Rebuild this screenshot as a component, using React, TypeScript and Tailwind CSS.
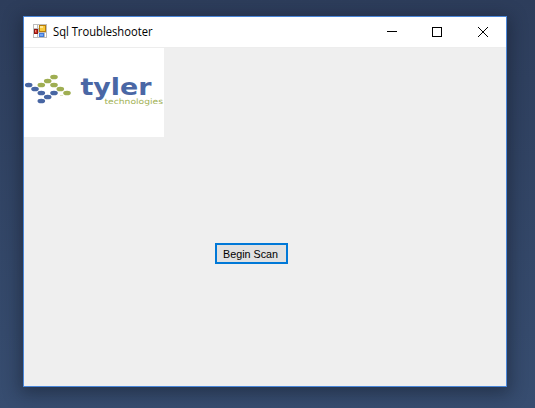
const BLUE_DOTS = [[28.7, 85], [35, 89], [41.3, 93], [47.7, 97], [54, 93], [41.3, 101]];
const GREEN_DOTS = [[54, 77], [47.7, 81], [41.3, 85], [54, 85], [60.3, 89], [67, 93]];

function AppIcon() {
  return (
    <svg width="14" height="14" viewBox="0 0 14 14" shapeRendering="crispEdges" className="mb-[2px]">
      <rect width="14" height="14" fill="#bdbdbd" />
      <rect x="1" y="1" width="3" height="3" fill="#fff" />
      <rect x="5" y="1" width="1" height="3" fill="#f2f2f2" />
      <rect x="1" y="10" width="3" height="3" fill="#fff" />
      <rect x="5" y="9" width="1" height="4" fill="#f2f2f2" />
      <rect x="12" y="9" width="1" height="4" fill="#fff" />
      <rect x="1" y="5" width="4" height="5" fill="#8e1712" />
      <rect x="2" y="6" width="2" height="3" fill="#d5382b" />
      <rect x="2" y="6" width="1" height="2" fill="#ee8a78" />
      <rect x="6" y="1" width="7" height="7" fill="#b87d08" />
      <rect x="7" y="2" width="5" height="5" fill="#f7c93c" />
      <rect x="7" y="2" width="3" height="2" fill="#ffe793" />
      <rect x="6" y="9" width="5" height="4" fill="#3f78d8" />
      <rect x="7" y="10" width="3" height="2" fill="#75a6f2" />
    </svg>
  );
}

function TylerLogo() {
  return (
    <svg width="140" height="89" viewBox="24 48 140 89" className="block bg-white">
      {BLUE_DOTS.map(([x, y]) => (
        <ellipse key={`${x}-${y}`} cx={x} cy={y} rx="3.8" ry="2.3" fill="#4866a3" />
      ))}
      {GREEN_DOTS.map(([x, y]) => (
        <ellipse key={`${x}-${y}`} cx={x} cy={y} rx="3.8" ry="2.3" fill="#9fae52" />
      ))}
      <text x="80.5" y="95.3" textLength="71" lengthAdjust="spacingAndGlyphs" className="font-['DejaVu_Sans',sans-serif] text-[23px] font-bold" fill="#4a67a5">
        tyler
      </text>
      <text x="104.5" y="103.5" textLength="58.5" lengthAdjust="spacingAndGlyphs" className="font-['DejaVu_Sans',sans-serif] text-[7.5px]" fill="#a0b052">
        technologies
      </text>
      <rect x="60" y="95" width="3" height="1" fill="#dfe5c4" />
    </svg>
  );
}

export default function App() {
  return (
    <div className="h-[408px] w-[535px] overflow-hidden bg-linear-to-b from-[#2d3d5b] to-[#374d70] pt-4 pl-[23px]">
      <div className="flex h-[371px] w-[484px] flex-col border border-[#4a86d8] bg-[#efefef] shadow-[0_4px_16px_3px_rgba(15,22,35,0.45)]">
        <header className="flex h-[30px] shrink-0 items-center bg-white pl-[9px]">
          <AppIcon />
          <h1 className="ml-[6px] grow whitespace-nowrap font-['Open_Sans','Noto_Sans',sans-serif] text-xs leading-[30px] text-black">
            <svg width="102" height="30" className="block overflow-visible">
              <text x="0" y="19" textLength="99.5" lengthAdjust="spacingAndGlyphs">Sql Troubleshooter</text>
            </svg>
          </h1>
          <div className="flex h-full">
            <button aria-label="Minimize" className="flex w-[46px] items-center justify-center">
              <svg width="10" height="10" shapeRendering="crispEdges"><path d="M0 4.5H10" stroke="#000" /></svg>
            </button>
            <button aria-label="Maximize" className="flex w-[44px] items-center justify-center">
              <svg width="10" height="10" shapeRendering="crispEdges"><path d="M.5.5H9.5V9.5H.5Z" fill="none" stroke="#000" /></svg>
            </button>
            <button aria-label="Close" className="flex w-[47px] items-center pl-[19px]">
              <svg width="10" height="10"><path d="M0 0L10 10M10 0L0 10" stroke="#000" /></svg>
            </button>
          </div>
        </header>
        <main className="flex grow flex-col items-start border-t border-[#ededed]">
          <TylerLogo />
          <button className="mt-[106px] ml-[191px] h-[21px] w-[73px] border-2 border-[#0078d7] bg-[#e1e1e1] pl-[6px]">
            <svg width="56" height="17" className="block overflow-visible font-['Liberation_Sans',Arial,sans-serif] text-[11.5px]">
              <text x="0" y="13" textLength="55" lengthAdjust="spacingAndGlyphs">Begin Scan</text>
            </svg>
          </button>
        </main>
      </div>
    </div>
  );
}
